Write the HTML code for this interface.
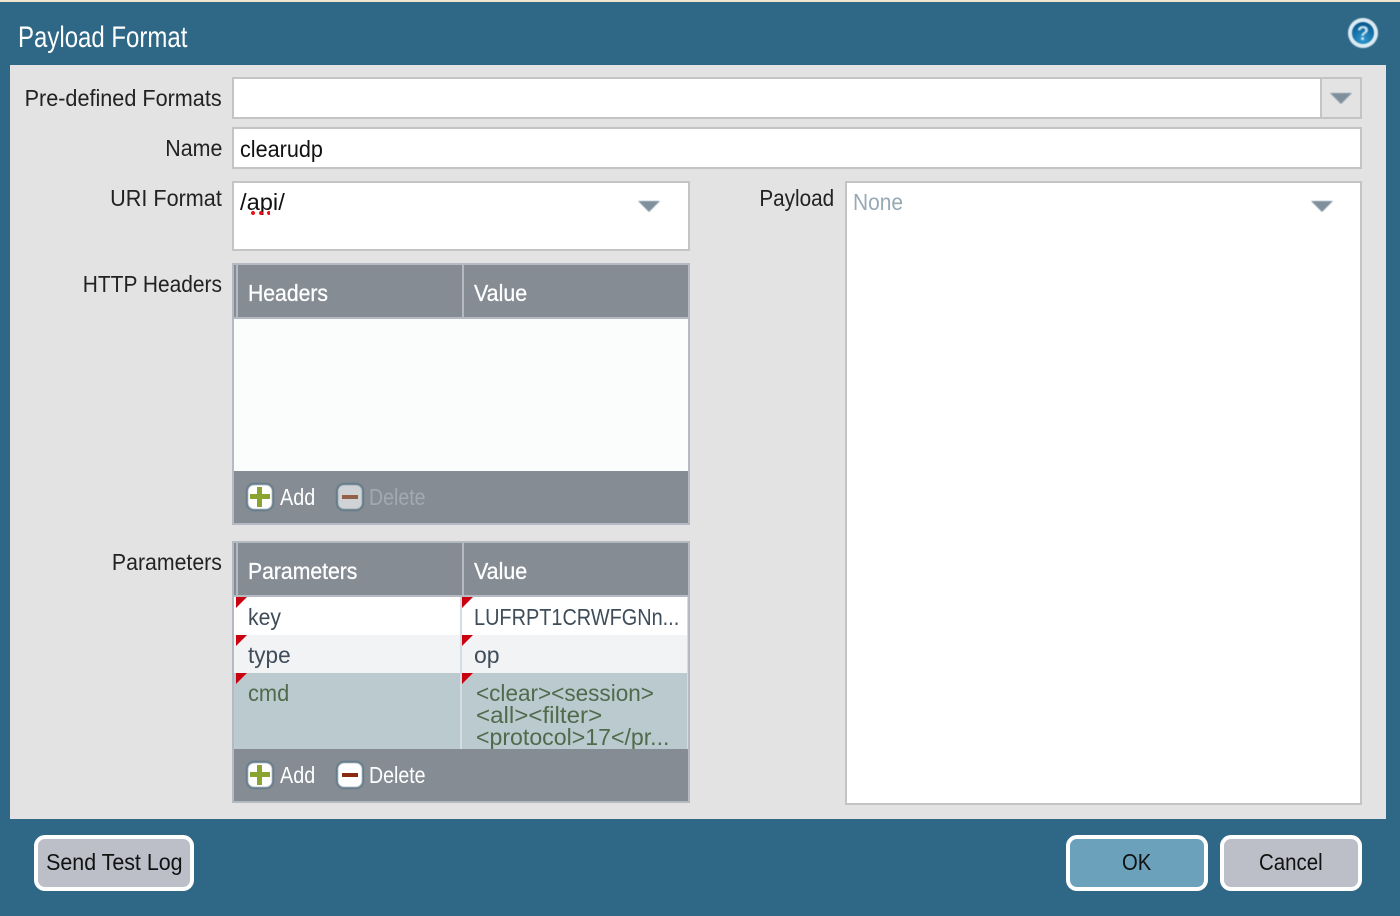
<!DOCTYPE html>
<html><head><meta charset="utf-8"><style>
html,body{margin:0;padding:0}
body{width:1400px;height:916px;position:relative;overflow:hidden;background:#2f6886;font-family:"Liberation Sans",sans-serif}
div{position:absolute;box-sizing:border-box}
.t{white-space:nowrap;line-height:26px;height:26px;font-size:23px;color:#222;transform-origin:left}
.l{text-align:right;right:1178px;transform-origin:right}
.box{background:#fff;border:2px solid #c4c4c4}
.hd{color:#fff;-webkit-text-stroke:.3px #fff}
.btn{border:4px solid #fff;border-radius:11px;background:#bcbfc7;color:#111;font-size:23px;text-align:center;line-height:46px}
.btn span{display:inline-block;white-space:nowrap}
.tri{width:0;height:0;border-left:11px solid transparent;border-right:11px solid transparent;border-top:11px solid #7f8f9c;filter:blur(.5px)}
.flag{width:0;height:0;border-top:11px solid #c8000f;border-right:11px solid transparent}
.ic{width:28px;height:28px;border-radius:8px;background:#fff;border:2px solid #5f7888;filter:blur(.5px)}
.pl{background:#8aa52f;filter:blur(.3px)}
</style></head><body>
<div style="left:0;top:0;width:1400px;height:2px;background:#efe6cf"></div>
<div class="t" style="left:18px;top:20px;font-size:30px;line-height:36px;height:36px;color:#fff;transform:scaleX(.8)">Payload Format</div>
<svg style="position:absolute;left:1347px;top:17px;filter:blur(.5px)" width="32" height="32"><defs><radialGradient id="g" cx=".5" cy=".8" r=".75"><stop offset="0" stop-color="#2f9ad0"/><stop offset="1" stop-color="#07588f"/></radialGradient></defs><circle cx="16" cy="16" r="15" fill="#dceaf2"/><circle cx="16" cy="16" r="11" fill="url(#g)"/><text x="16" y="23" text-anchor="middle" font-size="20" font-weight="bold" font-family="Liberation Sans" fill="#c8dfec">?</text></svg>
<div style="left:10px;top:65px;width:1376px;height:754px;background:#e3e3e3"></div>

<div class="t l" style="top:85px;transform:scaleX(.94)">Pre-defined Formats</div>
<div class="box" style="left:232px;top:77px;width:1130px;height:42px"></div>
<div style="left:1320px;top:79px;width:40px;height:38px;background:#e3e3e3;border-left:2px solid #c4c4c4"></div>
<div class="tri" style="left:1330px;top:93px"></div>

<div class="t l" style="top:135px;transform:scaleX(.93)">Name</div>
<div class="box" style="left:232px;top:127px;width:1130px;height:42px"></div>
<div class="t" style="left:240px;top:136px;color:#111;transform:scaleX(.94)">clearudp</div>

<div class="t l" style="top:185px;transform:scaleX(.94)">URI Format</div>
<div class="box" style="left:232px;top:181px;width:458px;height:70px"></div>
<div class="t" style="left:240px;top:189px;color:#111;transform:scaleX(1.03)">/api/</div>
<div style="left:249px;top:211px;width:21px;height:4px;background:radial-gradient(circle,#e8101a 1.8px,transparent 2.2px) 0 0/8px 4px repeat-x"></div>
<div class="tri" style="left:638px;top:201px"></div>

<div class="t l" style="left:auto;right:566px;top:185px;transform:scaleX(.9)">Payload</div>
<div class="box" style="left:845px;top:181px;width:517px;height:624px"></div>
<div class="t" style="left:853px;top:189px;color:#97a9b5;transform:scaleX(.91)">None</div>
<div class="tri" style="left:1311px;top:201px"></div>

<div class="t l" style="top:271px;transform:scaleX(.91)">HTTP Headers</div>
<div style="left:232px;top:263px;width:458px;height:262px;background:#fbfdfc;border:2px solid #b5bac2"></div>
<div style="left:234px;top:265px;width:454px;height:52px;background:#858c94"></div>
<div style="left:236px;top:265px;width:2px;height:52px;background:#b5bac2"></div>
<div style="left:462px;top:265px;width:2px;height:52px;background:#b5bac2"></div>
<div style="left:234px;top:317px;width:454px;height:2px;background:#b5bac2"></div>
<div class="t hd" style="left:248px;top:280px;transform:scaleX(.92)">Headers</div>
<div class="t hd" style="left:474px;top:280px;transform:scaleX(.93)">Value</div>
<div style="left:234px;top:471px;width:454px;height:52px;background:#858c94"></div>
<div class="ic" style="left:246px;top:483px"></div>
<div class="pl" style="left:250px;top:494px;width:20px;height:5px"></div>
<div class="pl" style="left:257px;top:487px;width:5px;height:20px"></div>
<div class="t" style="left:280px;top:484px;color:#fff;transform:scaleX(.86)">Add</div>
<div class="ic" style="left:336px;top:483px;background:#d0d3d6"></div>
<div style="left:342px;top:495px;width:16px;height:4px;background:#93604a"></div>
<div class="t" style="left:369px;top:484px;color:#a3a9b0;transform:scaleX(.85)">Delete</div>

<div class="t l" style="top:549px;transform:scaleX(.925)">Parameters</div>
<div style="left:232px;top:541px;width:458px;height:262px;background:#d5dde2;border:2px solid #b5bac2"></div>
<div style="left:234px;top:543px;width:454px;height:52px;background:#858c94"></div>
<div style="left:236px;top:543px;width:2px;height:52px;background:#b5bac2"></div>
<div style="left:462px;top:543px;width:2px;height:52px;background:#b5bac2"></div>
<div style="left:234px;top:595px;width:454px;height:2px;background:#b5bac2"></div>
<div class="t hd" style="left:248px;top:558px;transform:scaleX(.92)">Parameters</div>
<div class="t hd" style="left:474px;top:558px;transform:scaleX(.93)">Value</div>
<div style="left:234px;top:597px;width:453px;height:38px;background:#fff"></div>
<div style="left:234px;top:635px;width:453px;height:38px;background:#f2f3f5"></div>
<div style="left:234px;top:673px;width:453px;height:76px;background:#bacace"></div>
<div style="left:460px;top:597px;width:2px;height:152px;background:#d5dde2"></div>
<div class="flag" style="left:236px;top:597px"></div>
<div class="flag" style="left:462px;top:597px"></div>
<div class="flag" style="left:236px;top:635px"></div>
<div class="flag" style="left:462px;top:635px"></div>
<div class="flag" style="left:236px;top:673px"></div>
<div class="flag" style="left:462px;top:673px"></div>
<div class="t" style="left:248px;top:604px;color:#3f4d5a;transform:scaleX(.92)">key</div>
<div class="t" style="left:474px;top:604px;color:#3f4d5a;transform:scaleX(.865)">LUFRPT1CRWFGNn...</div>
<div class="t" style="left:248px;top:642px;color:#3f4d5a;transform:scaleX(.98)">type</div>
<div class="t" style="left:474px;top:642px;color:#3f4d5a">op</div>
<div class="t" style="left:248px;top:680px;color:#526a4c;transform:scaleX(.95)">cmd</div>
<div class="t" style="left:476px;top:680px;color:#526a4c;transform:scaleX(.98)">&lt;clear&gt;&lt;session&gt;</div>
<div class="t" style="left:476px;top:702px;color:#526a4c;transform:scaleX(1.05)">&lt;all&gt;&lt;filter&gt;</div>
<div class="t" style="left:476px;top:724px;color:#526a4c;transform:scaleX(1.005)">&lt;protocol&gt;17&lt;/pr...</div>
<div style="left:234px;top:749px;width:454px;height:52px;background:#858c94"></div>
<div class="ic" style="left:246px;top:761px"></div>
<div class="pl" style="left:250px;top:772px;width:20px;height:5px"></div>
<div class="pl" style="left:257px;top:765px;width:5px;height:20px"></div>
<div class="t" style="left:280px;top:762px;color:#fff;transform:scaleX(.86)">Add</div>
<div class="ic" style="left:336px;top:761px"></div>
<div style="left:342px;top:773px;width:16px;height:4px;background:#8a2a10"></div>
<div class="t" style="left:369px;top:762px;color:#fff;transform:scaleX(.85)">Delete</div>

<div class="btn" style="left:34px;top:835px;width:160px;height:56px"><span style="transform:scaleX(.93)">Send Test Log</span></div>
<div class="btn" style="left:1066px;top:835px;width:142px;height:56px;background:#6ba1ba"><span style="transform:scaleX(.88)">OK</span></div>
<div class="btn" style="left:1220px;top:835px;width:142px;height:56px"><span style="transform:scaleX(.89)">Cancel</span></div>
</body></html>
